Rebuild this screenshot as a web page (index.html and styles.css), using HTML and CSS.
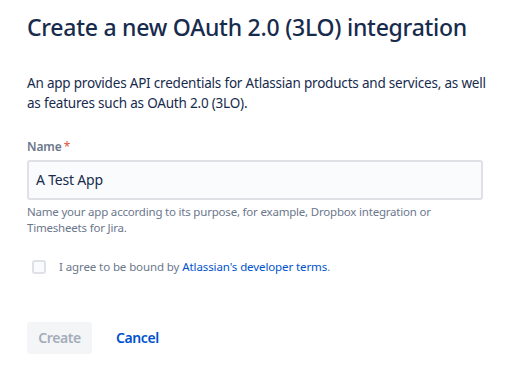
FILE: index.html
```html
<!DOCTYPE html>
<html>
<head>
<meta charset="utf-8">
<link rel="stylesheet" href="styles.css">
</head>
<body>
<main class="page">
  <h1 class="title">Create a new OAuth 2.0 (3LO) integration</h1>
  <p class="intro">An app provides API credentials for Atlassian products and services, as well as features such as OAuth 2.0 (3LO).</p>
  <div class="field">
    <label class="label">Name<span class="req">*</span></label>
    <div class="input">A Test App</div>
    <p class="help">Name your app according to its purpose, for example, Dropbox integration or Timesheets for Jira.</p>
  </div>
  <div class="agree">
    <span class="box"></span>
    <span class="agree-text">I agree to be bound by <a class="link">Atlassian's developer terms</a>.</span>
  </div>
  <div class="actions">
    <button class="btn btn-disabled">Create</button>
    <button class="btn btn-link">Cancel</button>
  </div>
</main>
</body>
</html>
```
FILE: styles.css
```css
* { box-sizing: border-box; }
html, body { margin: 0; padding: 0; background: #fff; }
body {
  font-family: "Noto Sans", "Open Sans", sans-serif;
  color: #172B4D;
}
.page { padding: 9px 27px 0 27px; width: 511px; }
.title {
  margin: 0;
  font-size: 23px;
  font-weight: 500;
  line-height: 36px;
  color: #172B4D;
  letter-spacing: -0.25px;
  white-space: nowrap;
}
.intro {
  margin: 28px 0 0 0;
  width: 470px;
  font-size: 13.5px;
  line-height: 20px;
  letter-spacing: -0.2px;
  color: #172B4D;
}
.field { margin-top: 26px; }
.label {
  display: block;
  font-size: 12px;
  font-weight: 600;
  line-height: 16px;
  color: #6B778C;
  letter-spacing: -0.1px;
}
.req { color: #E5533A; margin-left: 2px; font-weight: 400; }
.input {
  margin-top: 5px;
  width: 456px;
  height: 40px;
  border: 2px solid #DFE1E6;
  border-radius: 3px;
  background: #FAFBFC;
  padding: 0 7px;
  font-size: 14px;
  line-height: 36px;
  letter-spacing: -0.2px;
  color: #172B4D;
}
.help {
  margin: 4px 0 0 0;
  width: 420px;
  font-size: 11.5px;
  line-height: 16px;
  letter-spacing: -0.2px;
  color: #6B778C;
}
.agree {
  display: flex;
  align-items: center;
  margin-top: 23px;
  padding-left: 5px;
  gap: 13px;
}
.box {
  width: 14px;
  height: 14px;
  border: 2px solid #DFE1E6;
  border-radius: 3px;
  background: #FAFBFC;
}
.agree-text {
  font-size: 11.5px;
  line-height: 16px;
  letter-spacing: -0.1px;
  color: #6B778C;
}
.link { color: #0052CC; text-decoration: none; }
.actions {
  display: flex;
  gap: 12px;
  margin-top: 47px;
}
.btn {
  font-family: inherit;
  font-size: 14px;
  font-weight: 600;
  height: 32px;
  padding: 0 12px;
  border: 0;
  border-radius: 3px;
  line-height: 32px;
  letter-spacing: -0.4px;
}
.btn-disabled { background: #F4F5F7; color: #A5ADBA; width: 65px; padding: 0; text-align: center; }
.btn-link { background: transparent; color: #0052CC; }
```
